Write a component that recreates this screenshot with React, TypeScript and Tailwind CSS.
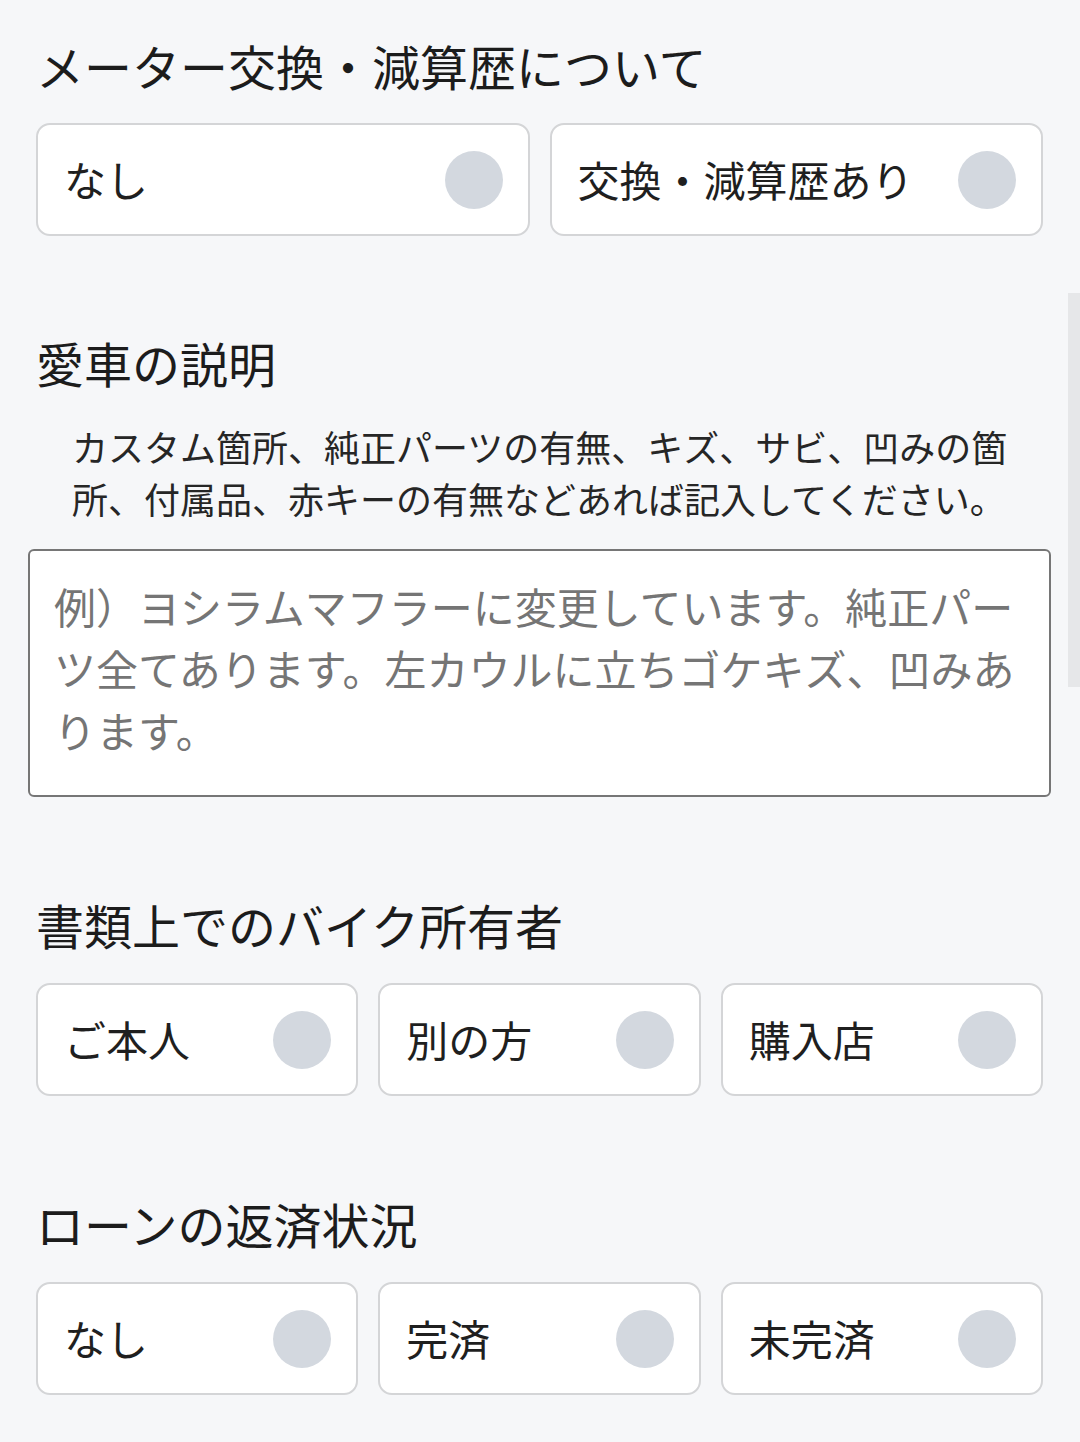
import { useState } from 'react';

type Option = { value: string; label: string };

const meterOptions: Option[] = [
  { value: 'none', label: 'なし' },
  { value: 'exists', label: '交換・減算歴あり' },
];

const ownerOptions: Option[] = [
  { value: 'self', label: 'ご本人' },
  { value: 'other', label: '別の方' },
  { value: 'shop', label: '購入店' },
];

const loanOptions: Option[] = [
  { value: 'none', label: 'なし' },
  { value: 'done', label: '完済' },
  { value: 'remaining', label: '未完済' },
];

const SectionTitle = ({ children }: { children: React.ReactNode }) => (
  <h2 className="text-[48px] leading-[64px] font-normal text-[#1c1c1c]">{children}</h2>
);

const RadioGroup = ({
  options,
  cols,
  selected,
  onSelect,
}: {
  options: Option[];
  cols: 2 | 3;
  selected: string | null;
  onSelect: (v: string) => void;
}) => (
  <div className={`grid gap-x-[20px] ${cols === 2 ? 'grid-cols-2' : 'grid-cols-3'}`}>
    {options.map(opt => {
      const active = selected === opt.value;
      return (
        <button
          key={opt.value}
          type="button"
          onClick={() => onSelect(opt.value)}
          className="h-[113px] flex items-center justify-between bg-white border-2 border-[#d4d5d7] rounded-[14px] pl-[26px] pr-[25px] text-left"
        >
          <span className="text-[42px] leading-none text-[#1f1f1f] -mt-[2px]">{opt.label}</span>
          <span
            className={`w-[58px] h-[58px] rounded-full shrink-0 ${
              active ? 'bg-[#2563eb]' : 'bg-[#d3d8df]'
            }`}
          />
        </button>
      );
    })}
  </div>
);

export default function App() {
  const [meter, setMeter] = useState<string | null>(null);
  const [owner, setOwner] = useState<string | null>(null);
  const [loan, setLoan] = useState<string | null>(null);
  const [description, setDescription] = useState('');

  return (
    <div className="relative min-h-[1442px] bg-[#f6f7f9] font-['Noto_Sans_CJK_JP','Noto_Sans',sans-serif] overflow-hidden">
      <div className="pl-[36px] pr-[37px] pt-[33px] pb-[46px]">
        {/* メーター */}
        <SectionTitle>メーター交換・減算歴について</SectionTitle>
        <div className="mt-[26px]">
          <RadioGroup options={meterOptions} cols={2} selected={meter} onSelect={setMeter} />
        </div>

        {/* 愛車の説明 */}
        <div className="mt-[94px]">
          <SectionTitle>愛車の説明</SectionTitle>
        </div>
        <p className="mt-[26px] pl-[36px] pr-[10px] text-[36px] leading-[52px] text-[#262626]">
          カスタム箇所、純正パーツの有無、キズ、サビ、凹みの箇所、付属品、赤キーの有無などあれば記入してください。
        </p>
        <textarea
          value={description}
          onChange={e => setDescription(e.target.value)}
          placeholder="例）ヨシラムマフラーに変更しています。純正パーツ全てあります。左カウルに立ちゴケキズ、凹みあります。"
          className="block mt-[25px] -ml-[8px] w-[calc(100%+16px)] h-[248px] bg-white border-2 border-[#767676] rounded-[6px] pt-[24px] pl-[24px] pr-[20px] text-[42px] leading-[62px] text-[#1f1f1f] placeholder:text-[#757575] resize-none outline-none"
        />

        {/* 所有者 */}
        <div className="mt-[95px]">
          <SectionTitle>書類上でのバイク所有者</SectionTitle>
        </div>
        <div className="mt-[27px]">
          <RadioGroup options={ownerOptions} cols={3} selected={owner} onSelect={setOwner} />
        </div>

        {/* ローン */}
        <div className="mt-[95px]">
          <SectionTitle>ローンの返済状況</SectionTitle>
        </div>
        <div className="mt-[27px]">
          <RadioGroup options={loanOptions} cols={3} selected={loan} onSelect={setLoan} />
        </div>
      </div>

      {/* overlay scrollbar */}
      <div className="absolute right-0 top-[293px] w-[12px] h-[394px] bg-[#e6e7e9]" />
    </div>
  );
}
